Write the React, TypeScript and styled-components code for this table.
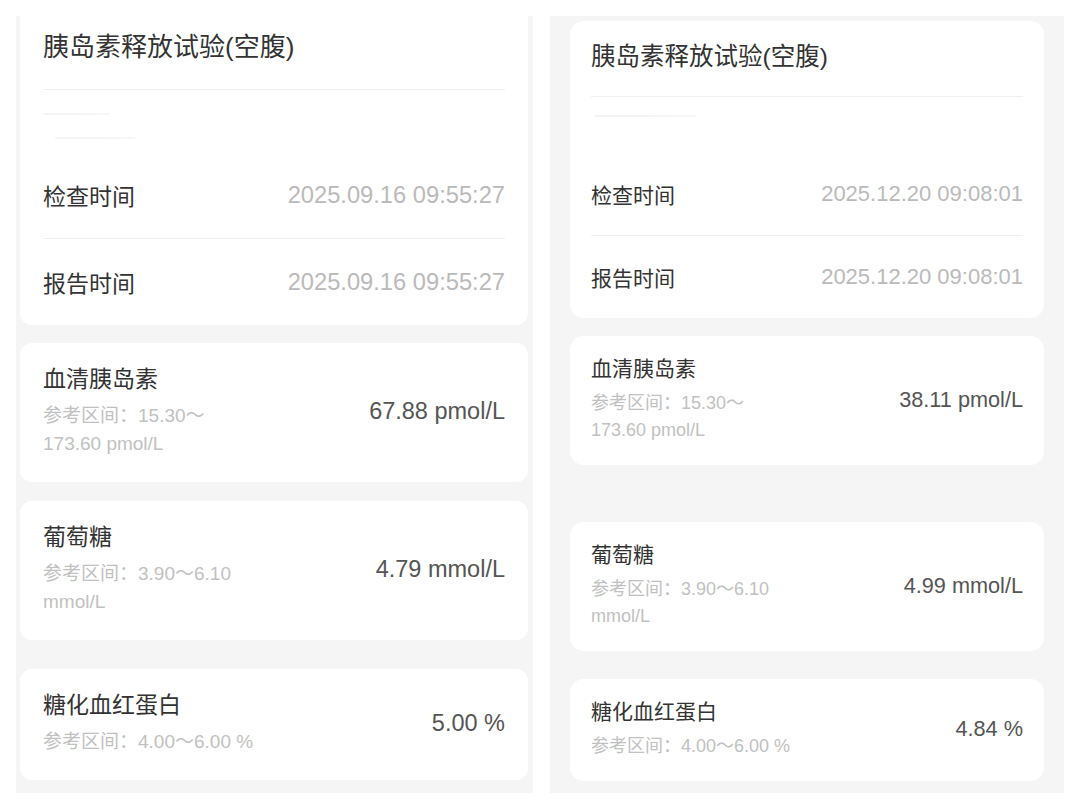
import React from "react";
import styled, { createGlobalStyle } from "styled-components";

type Cfg = {
  width: number;
  pad: string;
  side: number;
  radius: number;
  firstTopCut: boolean;
  titleSize: number;
  titleLh: number;
  titlePt: number;
  titleGap: number;
  redactH: number;
  rowH: number;
  labelSize: number;
  dateSize: number;
  nameSize: number;
  nameLh: number;
  itemPt: number;
  itemGap: number;
  itemPb: number;
  refSize: number;
  refLh: number;
  valueSize: number;
  gaps: number[];
  faint: { top: number; indent: number; w: number }[];
};

const GlobalStyle = createGlobalStyle`
  html, body { margin: 0; padding: 0; background: #ffffff; }
  body {
    font-family: "Liberation Sans", "Noto Sans CJK SC", "Noto Sans", sans-serif;
    -webkit-font-smoothing: antialiased;
  }
`;

const Page = styled.div`
  display: flex;
  align-items: flex-start;
  gap: 17px;
  padding: 16px 0 0 16px;
  width: 1080px;
  height: 810px;
  box-sizing: border-box;
`;

const Panel = styled.div<{ $c: Cfg }>`
  width: ${(p) => p.$c.width}px;
  height: 777px;
  box-sizing: border-box;
  background: #f5f5f5;
  padding: ${(p) => p.$c.pad};
  display: flex;
  flex-direction: column;
  overflow: hidden;
`;

const Card = styled.div<{ $c: Cfg; $mt: number; $cut?: boolean }>`
  background: #ffffff;
  margin-top: ${(p) => p.$mt}px;
  border-radius: ${(p) =>
    p.$cut ? `0 0 ${p.$c.radius}px ${p.$c.radius}px` : `${p.$c.radius}px`};
  padding: 0 ${(p) => p.$c.side}px;
  display: flex;
  flex-direction: column;
`;

const Title = styled.div<{ $c: Cfg }>`
  font-size: ${(p) => p.$c.titleSize}px;
  line-height: ${(p) => p.$c.titleLh}px;
  padding-top: ${(p) => p.$c.titlePt}px;
  margin-bottom: ${(p) => p.$c.titleGap}px;
  color: #333333;
  white-space: nowrap;
`;

const Divider = styled.div`
  height: 1px;
  background: #f0f0f0;
  flex-shrink: 0;
`;

const Redacted = styled.div<{ $c: Cfg }>`
  height: ${(p) => p.$c.redactH}px;
  position: relative;
`;

const Faint = styled.div<{ $top: number; $indent: number; $w: number }>`
  position: absolute;
  top: ${(p) => p.$top}px;
  left: ${(p) => p.$indent}px;
  width: ${(p) => p.$w}px;
  height: 2px;
  border-radius: 1px;
  background: linear-gradient(90deg, #f7f3f3, #f4f4f4 40%, #f7f7f7);
`;

const InfoRow = styled.div<{ $c: Cfg }>`
  height: ${(p) => p.$c.rowH}px;
  display: flex;
  align-items: center;
  justify-content: space-between;
`;

const Label = styled.span<{ $c: Cfg }>`
  font-size: ${(p) => p.$c.labelSize}px;
  color: #333333;
`;

const DateText = styled.span<{ $c: Cfg }>`
  font-size: ${(p) => p.$c.dateSize}px;
  color: #bababa;
`;

const ItemBody = styled.div<{ $c: Cfg }>`
  display: flex;
  align-items: center;
  justify-content: space-between;
  padding: ${(p) => p.$c.itemPt}px 0 ${(p) => p.$c.itemPb}px;
`;

const ItemLeft = styled.div`
  display: flex;
  flex-direction: column;
`;

const ItemName = styled.div<{ $c: Cfg }>`
  font-size: ${(p) => p.$c.nameSize}px;
  line-height: ${(p) => p.$c.nameLh}px;
  color: #333333;
  margin-bottom: ${(p) => p.$c.itemGap}px;
`;

const RefLine = styled.div<{ $c: Cfg }>`
  font-size: ${(p) => p.$c.refSize}px;
  line-height: ${(p) => p.$c.refLh}px;
  color: #c1c1c1;
  white-space: nowrap;
`;

const Value = styled.div<{ $c: Cfg }>`
  font-size: ${(p) => p.$c.valueSize}px;
  color: #555555;
  white-space: nowrap;
`;

const leftCfg: Cfg = {
  width: 517,
  pad: "0 5px 0 4px",
  side: 23,
  radius: 12,
  firstTopCut: true,
  titleSize: 26,
  titleLh: 36,
  titlePt: 13,
  titleGap: 24,
  redactH: 62,
  rowH: 86,
  labelSize: 23,
  dateSize: 23.7,
  nameSize: 23,
  nameLh: 30,
  itemPt: 21,
  itemGap: 8,
  itemPb: 24,
  refSize: 19,
  refLh: 28,
  valueSize: 23.5,
  gaps: [0, 18, 19, 29],
  faint: [
    { top: 23, indent: 0, w: 67 },
    { top: 47, indent: 12, w: 80 },
  ],
};

const rightCfg: Cfg = {
  width: 514,
  pad: "5px 20px 0 20px",
  side: 21,
  radius: 14,
  firstTopCut: false,
  titleSize: 24.5,
  titleLh: 34,
  titlePt: 19,
  titleGap: 22,
  redactH: 56,
  rowH: 82,
  labelSize: 21,
  dateSize: 22,
  nameSize: 21,
  nameLh: 28,
  itemPt: 19,
  itemGap: 7,
  itemPb: 21,
  refSize: 18,
  refLh: 27,
  valueSize: 21.7,
  gaps: [0, 18, 57, 28],
  faint: [{ top: 18, indent: 3, w: 103 }],
};

type Item = { name: string; ref: string[]; value: string };
type Report = { date: string; items: Item[] };

const reports: { cfg: Cfg; data: Report }[] = [
  {
    cfg: leftCfg,
    data: {
      date: "2025.09.16 09:55:27",
      items: [
        { name: "血清胰岛素", ref: ["参考区间：15.30～", "173.60 pmol/L"], value: "67.88 pmol/L" },
        { name: "葡萄糖", ref: ["参考区间：3.90～6.10", "mmol/L"], value: "4.79 mmol/L" },
        { name: "糖化血红蛋白", ref: ["参考区间：4.00～6.00 %"], value: "5.00 %" },
      ],
    },
  },
  {
    cfg: rightCfg,
    data: {
      date: "2025.12.20 09:08:01",
      items: [
        { name: "血清胰岛素", ref: ["参考区间：15.30～", "173.60 pmol/L"], value: "38.11 pmol/L" },
        { name: "葡萄糖", ref: ["参考区间：3.90～6.10", "mmol/L"], value: "4.99 mmol/L" },
        { name: "糖化血红蛋白", ref: ["参考区间：4.00～6.00 %"], value: "4.84 %" },
      ],
    },
  },
];

function ReportPanel({ cfg, data }: { cfg: Cfg; data: Report }) {
  return (
    <Panel $c={cfg}>
      <Card $c={cfg} $mt={cfg.gaps[0]} $cut={cfg.firstTopCut}>
        <Title $c={cfg}>胰岛素释放试验(空腹)</Title>
        <Divider />
        <Redacted $c={cfg}>
          {cfg.faint.map((f, i) => (
            <Faint key={i} $top={f.top} $indent={f.indent} $w={f.w} />
          ))}
        </Redacted>
        <InfoRow $c={cfg}>
          <Label $c={cfg}>检查时间</Label>
          <DateText $c={cfg}>{data.date}</DateText>
        </InfoRow>
        <Divider />
        <InfoRow $c={cfg}>
          <Label $c={cfg}>报告时间</Label>
          <DateText $c={cfg}>{data.date}</DateText>
        </InfoRow>
      </Card>
      {data.items.map((it, i) => (
        <Card key={it.name} $c={cfg} $mt={cfg.gaps[i + 1]}>
          <ItemBody $c={cfg}>
            <ItemLeft>
              <ItemName $c={cfg}>{it.name}</ItemName>
              {it.ref.map((r) => (
                <RefLine key={r} $c={cfg}>
                  {r}
                </RefLine>
              ))}
            </ItemLeft>
            <Value $c={cfg}>{it.value}</Value>
          </ItemBody>
        </Card>
      ))}
    </Panel>
  );
}

export default function App() {
  return (
    <>
      <GlobalStyle />
      <Page>
        {reports.map((r, i) => (
          <ReportPanel key={i} cfg={r.cfg} data={r.data} />
        ))}
      </Page>
    </>
  );
}
